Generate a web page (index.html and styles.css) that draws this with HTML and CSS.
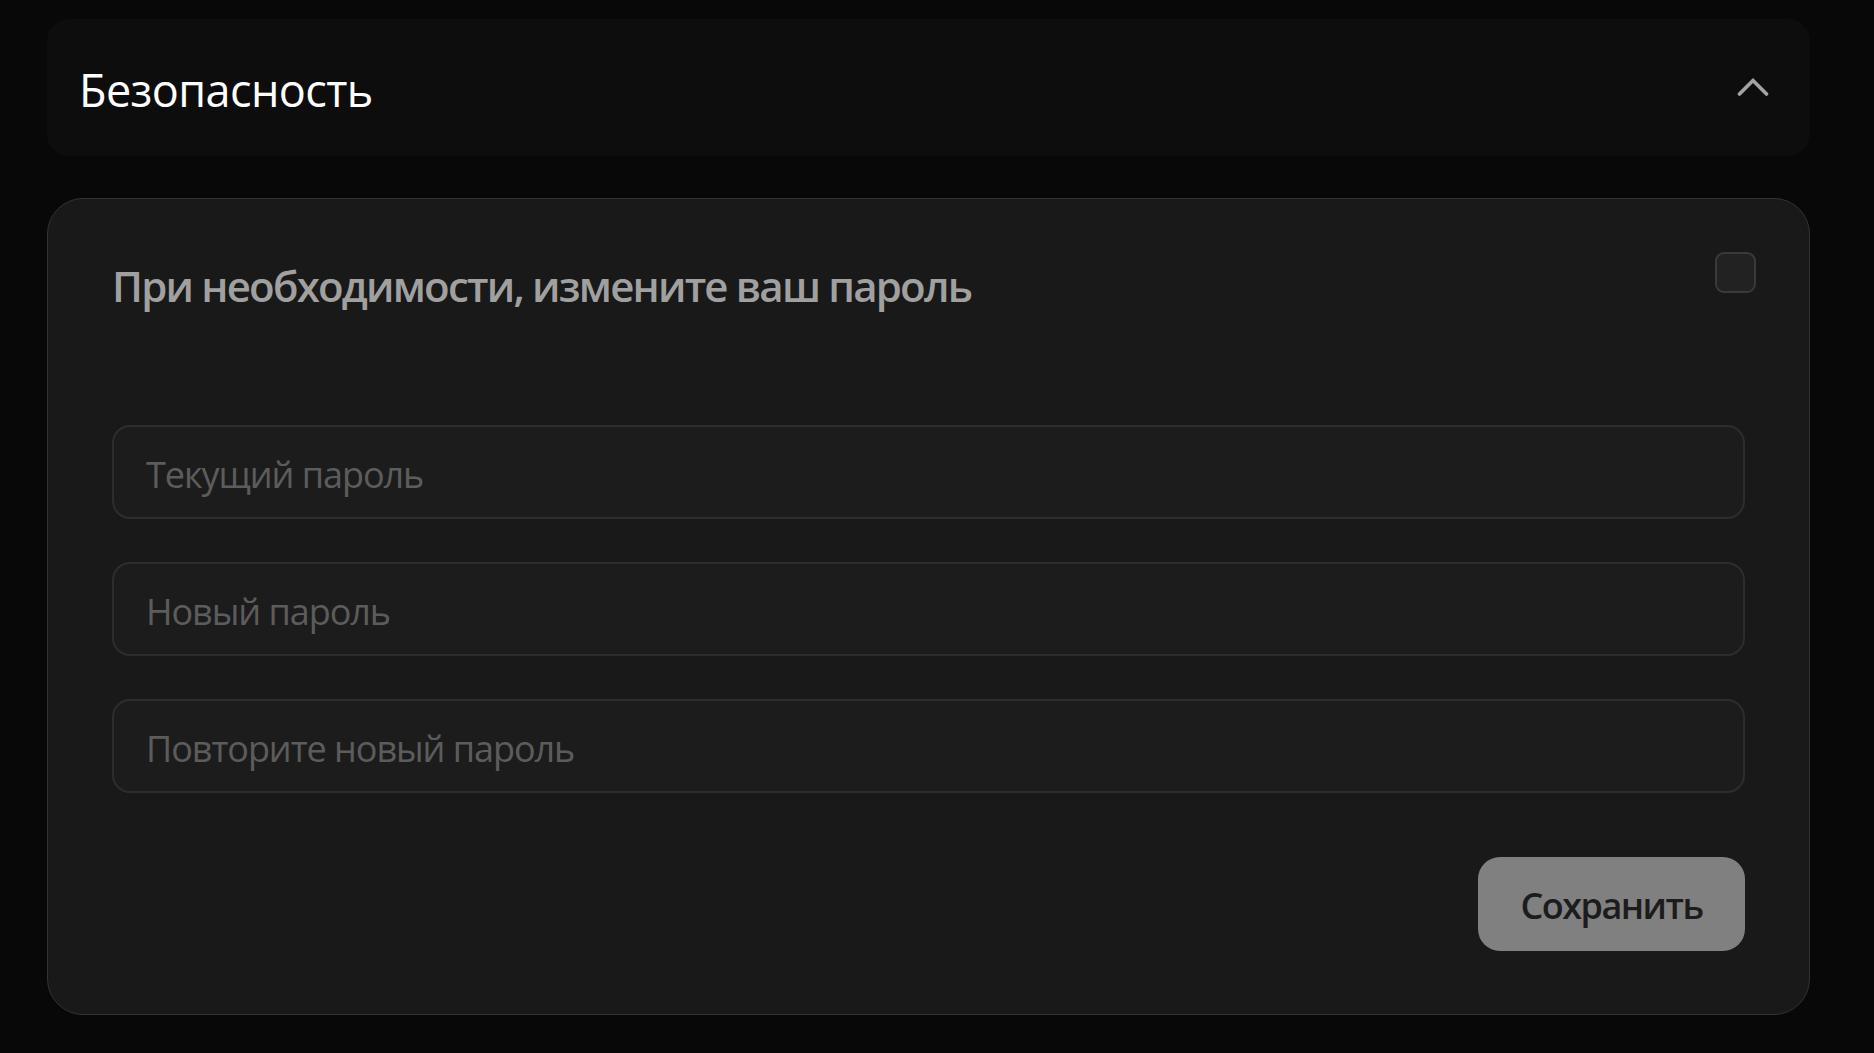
FILE: index.html
```html
<!DOCTYPE html>
<html lang="ru">
<head>
<meta charset="utf-8">
<title>Безопасность</title>
<link rel="stylesheet" href="styles.css">
</head>
<body>
<div class="page">
  <section class="section-head">
    <h2 class="section-title">Безопасность</h2>
    <svg class="chevron" width="32" height="20" viewBox="0 0 32 20" aria-hidden="true">
      <polyline points="2.5,17 16,3.5 29.5,17" fill="none" stroke="#a3a3a3" stroke-width="3.6" stroke-linecap="round" stroke-linejoin="miter"/>
    </svg>
  </section>
  <section class="card">
    <div class="card-head">
      <h3 class="card-title">При необходимости, измените ваш пароль</h3>
      <span class="checkbox"></span>
    </div>
    <div class="fields">
      <input class="field" type="password" placeholder="Текущий пароль">
      <input class="field" type="password" placeholder="Новый пароль">
      <input class="field" type="password" placeholder="Повторите новый пароль">
    </div>
    <div class="actions">
      <button class="save" type="button">Сохранить</button>
    </div>
  </section>
</div>
</body>
</html>
```

FILE: styles.css
```css
* { box-sizing: border-box; }
html, body {
  margin: 0;
  padding: 0;
  background: #080808;
  height: 100%;
}
body {
  font-family: "Open Sans", "Noto Sans", sans-serif;
  overflow: hidden;
}
.page {
  padding: 19px 64px 0 47px;
  display: flex;
  flex-direction: column;
  gap: 42px;
}
.section-head {
  height: 137px;
  background: #0d0d0d;
  border-radius: 22px;
  display: flex;
  align-items: center;
  justify-content: space-between;
  padding: 0 41px 0 32px;
}
.section-title {
  margin: 4px 0 0 0;
  font-size: 45px;
  font-weight: 400;
  color: #ffffff;
  letter-spacing: -0.6px;
  line-height: 1.362;
}
.chevron { display: block; margin-top: -1px; }
.card {
  background: #191919;
  border: 1.5px solid #333333;
  border-radius: 36px;
  padding: 53px 64px 63px 64px;
}
.card-head {
  display: flex;
  justify-content: space-between;
  align-items: flex-start;
}
.card-title {
  margin: 10px 0 0 0;
  font-size: 42px;
  font-weight: 600;
  color: #a0a0a0;
  line-height: 48px;
  letter-spacing: -1.8px;
}
.checkbox {
  width: 41px;
  height: 41px;
  border: 2px solid #3a3a3a;
  background: #222222;
  border-radius: 9px;
  margin-right: -11px;
}
.fields {
  margin-top: 115px;
  display: flex;
  flex-direction: column;
  gap: 43px;
}
.field {
  display: block;
  width: 100%;
  height: 94px;
  background: #1c1c1c;
  border: 2px solid #2d2d2d;
  border-radius: 18px;
  padding: 4px 32px 0 32px;
  font-family: "Open Sans", "Noto Sans", sans-serif;
  font-size: 36px;
  color: #cccccc;
  outline: none;
  letter-spacing: -1.05px;
}
.field::placeholder { color: #5c5c5c; }
.actions {
  margin-top: 64px;
  display: flex;
  justify-content: flex-end;
}
.save {
  width: 267px;
  height: 94px;
  border: none;
  border-radius: 22px;
  background: #808080;
  color: #1c1c1c;
  font-family: "Open Sans", "Noto Sans", sans-serif;
  font-size: 36px;
  font-weight: 600;
  letter-spacing: -1.5px;
  padding: 2px 0 0 0;
}
```
